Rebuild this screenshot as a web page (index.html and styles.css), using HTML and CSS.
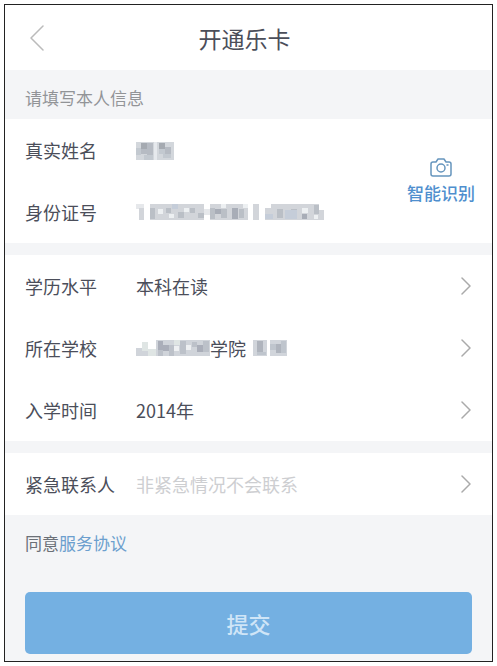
FILE: index.html
```html
<!DOCTYPE html>
<html lang="zh-CN">
<head>
  <meta charset="utf-8">
  <meta name="viewport" content="width=device-width, initial-scale=1">
  <title>开通乐卡</title>
  <link rel="stylesheet" href="styles.css">
</head>
<body>
  <form class="page">
    <header class="header">
      <button type="button" class="back" aria-label="返回">
        <svg width="14" height="26" viewBox="0 0 14 26"><path d="M13 1 1 13l12 12"/></svg>
      </button>
      <h1>开通乐卡</h1>
    </header>

    <p class="tip">请填写本人信息</p>

    <section class="group with-scan">
      <div class="fields">
        <div class="row">
          <label for="realName">真实姓名</label>
          <div class="masked">
            <input type="text" id="realName">
            <svg class="mosaic" width="38" height="18" viewBox="0 0 38 18">
              <path fill="#d3d7dc" d="M0 0h38v18H0z"/>
              <path fill="#a5aab1" d="M5 1h6v6H5zM23 1h6v6h-6z"/>
              <path fill="#b6bbc3" d="M11 1h6v12h-6zM29 5h6v7h-6zM5 7h6v5H5z"/>
              <path fill="#e6e9ed" d="M18 0h3v18h-3z"/>
              <path fill="#c3c9d0" d="M0 6h5v7H0zM23 7h6v5h-6zM8 13h9v5H8zM27 12h8v4h-8z"/>
            </svg>
          </div>
        </div>
        <div class="row">
          <label for="idCard">身份证号</label>
          <div class="masked">
            <input type="text" id="idCard">
            <svg class="mosaic" width="188" height="16" viewBox="0 0 188 16">
              <path fill="#e6e8eb" d="M0 0h8v5H0zM68 5h6v6h-6z"/>
              <path fill="#d2d5da" d="M3 4h5v12H3zM14 0h54v16H14zM74 0h38v16H74zM117 0h6v16h-6zM129 4h6v12h-6zM135 0h48v16h-48zM183 6h5v10h-5z"/>
              <path fill="#babfc6" d="M14 4h5v11h-5zM30 4h5v5h-5zM42 8h6v6h-6zM54 4h5v5h-5zM62 9h6v5h-6zM74 4h5v11h-5zM85 5h6v9h-6zM103 5h5v9h-5zM141 5h6v9h-6zM155 5h6v5h-6zM178 1h5v9h-5z"/>
              <path fill="#a8adb7" d="M79 5h6v5h-6zM96 4h6v11h-6zM166 10h5v5h-5z"/>
              <path fill="#c5cdd9" d="M149 6h12v9h-12zM129 10h8v5h-8zM36 0h6v5h-6z"/>
              <path fill="#edf0f2" d="M22 5h5v5h-5zM33 10h5v4h-5zM48 4h5v4h-5zM85 0h5v4h-5zM107 0h5v4h-5zM166 4h6v5h-6zM178 11h4v4h-4z"/>
            </svg>
          </div>
        </div>
      </div>
      <button type="button" class="scan">
        <svg width="22" height="19" viewBox="0 0 22 19">
          <path d="M3 4h3l2-3h6l2 3h3a2 2 0 0 1 2 2v10a2 2 0 0 1-2 2H3a2 2 0 0 1-2-2V6a2 2 0 0 1 2-2z"/>
          <circle cx="11" cy="10" r="4"/>
          <path d="M17 7h1"/>
        </svg>
        智能识别
      </button>
    </section>

    <section class="group">
      <div class="row">
        <label for="degree">学历水平</label>
        <button type="button" class="picker" id="degree">
          <span>本科在读</span>
          <svg class="arrow" width="10" height="18" viewBox="0 0 10 18"><path d="m1 1 8 8-8 8"/></svg>
        </button>
      </div>
      <div class="row">
        <label for="school">所在学校</label>
        <button type="button" class="picker" id="school">
          <span class="school">
            <svg width="74" height="16" viewBox="0 0 74 16">
              <path fill="#d0d4da" d="M0 8h6v8H0zM6 2h6v14H6zM20 0h54v16H20z"/>
              <path fill="#dfe5e4" d="M6 2h6v9H6zM12 9h8v7h-8zM38 0h6v5h-6z"/>
              <path fill="#aaaeb9" d="M22 1h5v9h-5zM27 5h6v6h-6zM61 5h6v7h-6z"/>
              <path fill="#bcc1c9" d="M33 5h5v11h-5zM44 1h6v13h-6zM56 2h5v5h-5zM67 1h6v11h-6zM22 10h5v6h-5z"/>
              <path fill="#eef0f2" d="M50 5h5v5h-5zM38 6h5v5h-5z"/>
            </svg>
            学院
            <svg class="second" width="34" height="16" viewBox="0 0 34 16">
              <path fill="#d1d5db" d="M0 0h14v16H0zM17 0h17v16H17z"/>
              <path fill="#afb4bd" d="M4 1h6v11H4zM23 4h6v9h-6z"/>
              <path fill="#bfc5cd" d="M17 4h6v6h-6zM28 1h5v12h-5zM4 12h9v3H4z"/>
            </svg>
          </span>
          <svg class="arrow" width="10" height="18" viewBox="0 0 10 18"><path d="m1 1 8 8-8 8"/></svg>
        </button>
      </div>
      <div class="row">
        <label for="enrolled">入学时间</label>
        <button type="button" class="picker" id="enrolled">
          <span>2014年</span>
          <svg class="arrow" width="10" height="18" viewBox="0 0 10 18"><path d="m1 1 8 8-8 8"/></svg>
        </button>
      </div>
    </section>

    <section class="group">
      <div class="row">
        <label for="contact">紧急联系人</label>
        <input type="text" id="contact" placeholder="非紧急情况不会联系" readonly>
        <svg class="arrow" width="10" height="18" viewBox="0 0 10 18"><path d="m1 1 8 8-8 8"/></svg>
      </div>
    </section>

    <p class="agreement">同意<a href="#">服务协议</a></p>

    <button type="submit" class="submit">提交</button>
  </form>
</body>
</html>
```

FILE: styles.css
```css
* {
  box-sizing: border-box;
}

body {
  margin: 0;
  padding: 4px;
  background: #fff;
  color: #4b4e5a;
  font-family: "Noto Sans CJK SC", "Noto Sans", sans-serif;
  font-size: 18px;
  line-height: 24px;
}

button,
input {
  padding: 0;
  border: 0;
  background: none;
  color: inherit;
  font: inherit;
}

button {
  cursor: pointer;
}

svg {
  flex: none;
  fill: none;
  stroke-linecap: round;
  stroke-linejoin: round;
}

.page {
  padding-bottom: 7px;
  border: 1px solid #222;
  background: #f4f5f7;
}

/* Header */
.header {
  display: grid;
  grid-template-columns: 60px 1fr 68px;
  align-items: center;
  height: 65px;
  background: #fff;
}

.header h1 {
  margin: 0;
  font-size: 23px;
  font-weight: 400;
  line-height: 32px;
  text-align: center;
}

.back {
  display: flex;
  padding-left: 25px;
  stroke: #bbb;
  stroke-width: 1.5;
}

.tip {
  margin: 0;
  padding: 16px 20px 9px;
  color: #929497;
  font-size: 17px;
}

/* Form rows */
.group {
  margin-bottom: 12px;
  background: #fff;
}

.with-scan {
  display: flex;
}

.fields {
  flex: 1;
  min-width: 0;
}

.row {
  display: flex;
  align-items: center;
  height: 62px;
  padding: 0 20px;
}

.row label {
  flex: none;
  width: 111px;
}

.row input {
  flex: 1;
  width: 100%;
  min-width: 0;
  outline: none;
}

.row input::placeholder {
  color: #cdced1;
  opacity: 1;
}

.masked {
  position: relative;
  flex: 1;
}

.mosaic {
  position: absolute;
  top: 4px;
  left: 0;
}

.picker {
  display: flex;
  flex: 1;
  align-items: center;
  justify-content: space-between;
  height: 100%;
  text-align: left;
}

.school {
  display: flex;
  align-items: center;
}

.school .second {
  margin-left: 7px;
}

.arrow {
  margin-right: 1px;
  stroke: #aaa;
  stroke-width: 1.5;
}

.scan {
  display: flex;
  flex-direction: column;
  align-items: center;
  justify-content: center;
  gap: 4px;
  padding-right: 17px;
  color: #4f8fce;
  font-size: 17px;
  font-weight: 500;
}

.scan svg {
  stroke: #6695bd;
  stroke-width: 1.5;
}

/* Footer */
.agreement {
  margin: 0;
  padding: 4px 20px 37px;
  color: #6b7077;
  font-size: 17px;
}

.agreement a {
  color: #6c9fce;
  text-decoration: none;
}

.submit {
  display: block;
  width: calc(100% - 40px);
  height: 62px;
  margin: 0 20px;
  border-radius: 5px;
  background: #74b0e2;
  color: #cfe5f7;
  font-size: 22px;
  font-weight: 500;
}
```
